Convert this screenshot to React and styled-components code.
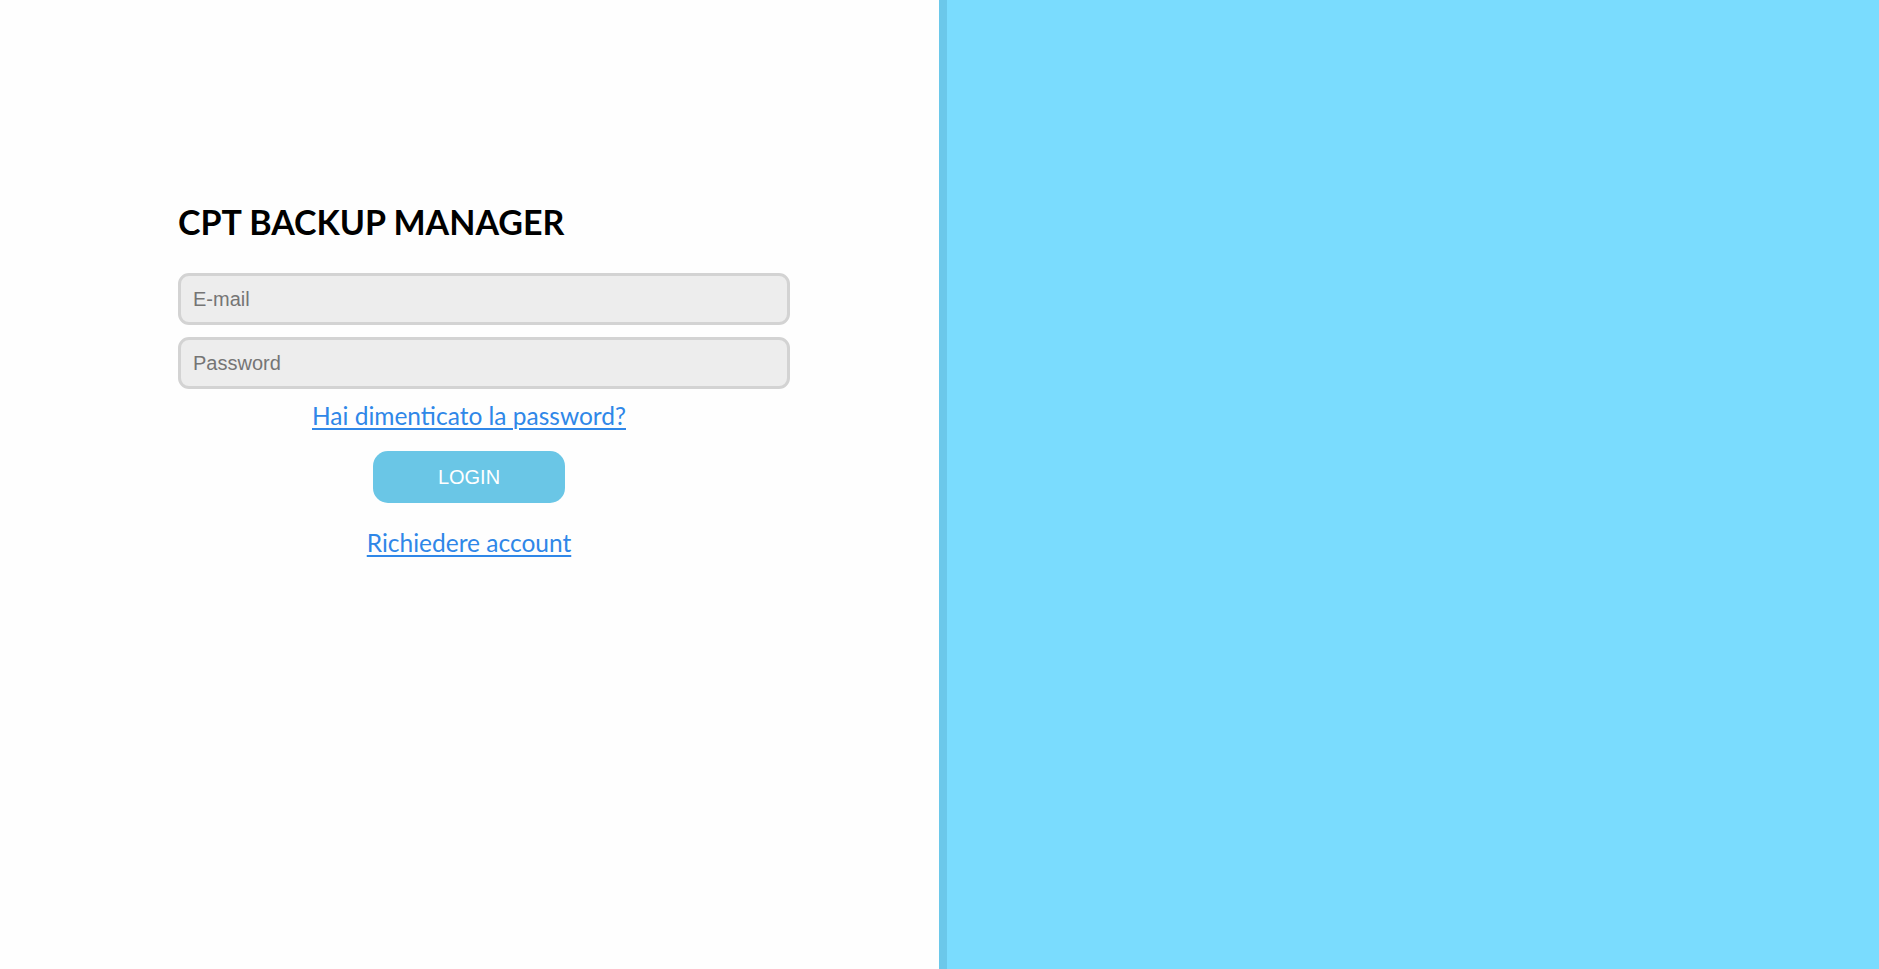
import styled, { createGlobalStyle } from "styled-components"

const GlobalStyle = createGlobalStyle`
  html, body {
    margin: 0;
    padding: 0;
    height: 100%;
  }
  body {
    font-family: "Liberation Sans", Arial, sans-serif;
  }
  #root {
    height: 100%;
  }
`

const App = () => {
  return (
    <>
      <GlobalStyle />
      <StPage>
        <StLeft>
          <StForm onSubmit={(e) => e.preventDefault()}>
            <h1>CPT BACKUP MANAGER</h1>
            <StInput type="email" placeholder="E-mail" />
            <StInput type="password" placeholder="Password" />
            <StLink href="#">Hai dimenticato la password?</StLink>
            <StButton type="submit">LOGIN</StButton>
            <StLink href="#" className="request">Richiedere account</StLink>
          </StForm>
        </StLeft>
        <StRight />
      </StPage>
    </>
  )
}

const StPage = styled.div`
  display: flex;
  height: 100vh;
  overflow: hidden;
`

const StLeft = styled.div`
  width: 939px;
  flex-shrink: 0;
  background: #fefefe;
  padding: 202px 0 0 178px;
  box-sizing: border-box;
`

const StForm = styled.form`
  width: 582px;
  display: flex;
  flex-direction: column;
  align-items: center;
  h1 {
    align-self: flex-start;
    margin: 0 0 31px;
    font-family: Lato, "DejaVu Sans", sans-serif;
    font-weight: 700;
    font-size: 34px;
    line-height: 40px;
    color: #000;
  }
  .request {
    margin-top: 25px;
  }
`

const StInput = styled.input`
  align-self: flex-start;
  box-sizing: content-box;
  width: 100%;
  height: 46px;
  padding: 0 12px;
  margin: 0 0 12px;
  border: 3px solid #d3d3d3;
  border-radius: 11px;
  background: #ededed;
  font-family: "Liberation Sans", Arial, sans-serif;
  font-size: 20px;
  color: #333;
  outline: none;
  &::placeholder {
    color: #757575;
  }
`

const StLink = styled.a`
  font-family: Lato, "DejaVu Sans", sans-serif;
  font-size: 24.5px;
  line-height: 30px;
  color: #2f87e8;
  text-decoration: underline;
  text-decoration-thickness: 2px;
  text-underline-offset: 3px;
`

const StButton = styled.button`
  margin-top: 20px;
  width: 192px;
  height: 52px;
  border: none;
  border-radius: 15px;
  background: #6ac6e6;
  color: #fff;
  font-family: "Liberation Sans", Arial, sans-serif;
  font-size: 20px;
  cursor: pointer;
`

const StRight = styled.div`
  flex: 1;
  background: #7adcfe;
  border-left: 8px solid #6bc8ea;
`

export default App
